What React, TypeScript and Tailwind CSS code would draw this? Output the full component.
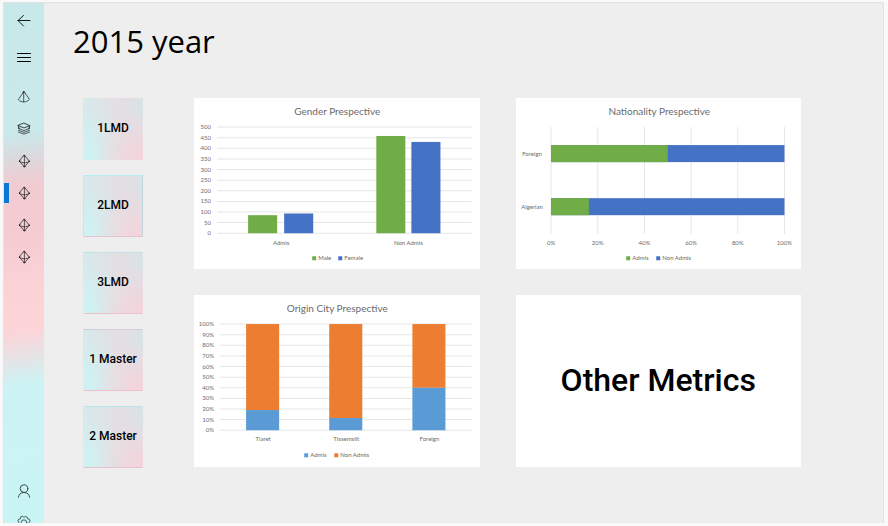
import type { ReactNode } from "react";

const GREEN = "#70ad47";
const BLUE = "#4472c4";
const SKY = "#5b9bd5";
const ORANGE = "#ed7d31";

function Icon({ children }: { children: ReactNode }) {
  return (
    <svg
      width="16"
      height="16"
      viewBox="0 0 16 16"
      fill="none"
      stroke="currentColor"
      strokeLinecap="round"
      strokeLinejoin="round"
      aria-hidden="true"
    >
      {children}
    </svg>
  );
}

const BackIcon = () => (
  <Icon>
    <path d="M14 7.5H2M7.5 2.5L2 7.5l5.5 5.5" strokeWidth="0.9" />
  </Icon>
);

const MenuIcon = () => (
  <Icon>
    <path d="M1.5 4.5h13M1.5 8.5h13M1.5 12.5h13" strokeWidth="1.1" />
  </Icon>
);

const PyramidIcon = () => (
  <Icon>
    <path d="M7.7 2.8L2.3 10.6C3.6 12.2 5.6 12.9 7.7 12.9S11.8 12.2 13.2 10.6ZM7.7 2.8V12.9" strokeWidth="0.7" />
    <path d="M6.9 3.2L7.7 2.4L8.5 3.2" strokeWidth="1" />
  </Icon>
);

const LayersIcon = () => (
  <Icon>
    <path d="M8 2.2L13.8 4.6L8 7L2.2 4.6Z" strokeWidth="0.8" />
    <path
      d="M2.4 6.6L3.8 7.3M13.6 6.6L12.2 7.3M2.4 7.4L8 9.6L13.6 7.4M2.4 9.2L8 11.4L13.6 9.2M2.4 11L8 13.2L13.6 11M2.2 4.6L2.6 6.8M13.8 4.6L13.4 6.8"
      strokeWidth="0.7"
    />
  </Icon>
);

const OctahedronIcon = () => (
  <Icon>
    <path d="M8.4 2.3L13.4 8.2L8.4 14L3.4 8.2Z" strokeWidth="0.7" />
    <path d="M8.4 2.3V14M3.4 8.2C5 9.4 6.6 9.8 8.4 9.8s3.4-.4 5-1.6" strokeWidth="0.7" />
    <path d="M7.7 2.9L8.4 2.2L9.1 2.9M7.7 13.4L8.4 14.1L9.1 13.4M3.8 7.7L3.3 8.2L3.8 8.7M13 7.7L13.5 8.2L13 8.7" strokeWidth="1" />
  </Icon>
);

const UserIcon = () => (
  <Icon>
    <circle cx="8" cy="5.6" r="3.8" strokeWidth="1" />
    <path d="M2.4 14.2C2.6 11.5 4.8 9.5 8 9.5s5.4 2 5.6 4.7" strokeWidth="1" />
  </Icon>
);

const GearIcon = () => (
  <Icon>
    <path
      d="M6.6 1.4L8 2.4l1.4-1 1.8.7.3 1.7 1.7.3.9 1.9-.9 1.5 1 1.6-.9 1.8-1.7.3-.4 1.7-1.8.7L8 12.7l-1.4.9-1.8-.7-.4-1.7-1.7-.3-.9-1.8 1-1.6L1.9 6l.9-1.9 1.7-.3.3-1.7z"
      strokeWidth="0.9"
    />
    <circle cx="8" cy="7.6" r="2.8" strokeWidth="0.9" />
  </Icon>
);

function NavButton({
  label,
  active = false,
  tall = false,
  children,
}: {
  label: string;
  active?: boolean;
  tall?: boolean;
  children: ReactNode;
}) {
  return (
    <button
      type="button"
      aria-label={label}
      aria-current={active ? "page" : undefined}
      className={`relative flex w-full shrink-0 items-center justify-center ${tall ? "h-9" : "h-8"}`}
    >
      {active && <span className="absolute left-0 h-5 w-[5px] bg-[#0a78d7]" />}
      {children}
    </button>
  );
}

type LegendItem = { label: string; color: string; x: number };

function ChartFrame({
  title,
  legend,
  children,
}: {
  title: string;
  legend: LegendItem[];
  children: ReactNode;
}) {
  return (
    <section className="bg-white">
      <svg
        viewBox="0 0 285 171"
        role="img"
        aria-label={title}
        className="block w-full font-['Lato',sans-serif]"
      >
        <text x="143" y="17" textAnchor="middle" className="fill-[#6b6b6b] text-[10px]">
          {title}
        </text>
        {children}
        {legend.map((item) => (
          <g key={item.label}>
            <rect x={item.x} y="158" width="4" height="4" fill={item.color} />
            <text x={item.x + 6} y="162" className="fill-[#6b6b6b] text-[6px]">
              {item.label}
            </text>
          </g>
        ))}
      </svg>
    </section>
  );
}

const TOP = 29;
const BASE = 135;

function ValueAxis({ labels, left }: { labels: string[]; left: number }) {
  const step = (BASE - TOP) / (labels.length - 1);
  return (
    <>
      {labels.map((label, i) => {
        const y = BASE - i * step;
        return (
          <g key={label}>
            <line x1={left} x2="277" y1={y} y2={y} stroke="#e6e6e6" />
            <text x={left - 6} y={y + 2} textAnchor="end" className="fill-[#6b6b6b] text-[6px]">
              {label}
            </text>
          </g>
        );
      })}
    </>
  );
}

function Category({ x, y, children }: { x: number; y: number; children: string }) {
  return (
    <text x={x} y={y} textAnchor="middle" className="fill-[#6b6b6b] text-[6px]">
      {children}
    </text>
  );
}

function GenderChart() {
  const labels = Array.from({ length: 11 }, (_, i) => String(i * 50));
  const bars = [
    { x: 54, value: 85, color: GREEN },
    { x: 90, value: 93, color: BLUE },
    { x: 182, value: 458, color: GREEN },
    { x: 217, value: 430, color: BLUE },
  ];
  return (
    <ChartFrame
      title="Gender Prespective"
      legend={[
        { label: "Male", color: GREEN, x: 118 },
        { label: "Female", color: BLUE, x: 144 },
      ]}
    >
      <ValueAxis labels={labels} left={23} />
      {bars.map((bar) => {
        const height = (bar.value / 500) * (BASE - TOP);
        return <rect key={bar.x} x={bar.x} y={BASE - height} width="29" height={height} fill={bar.color} />;
      })}
      <Category x={87} y={147}>Admis</Category>
      <Category x={214} y={147}>Non Admis</Category>
    </ChartFrame>
  );
}

function OriginChart() {
  const labels = Array.from({ length: 11 }, (_, i) => `${i * 10}%`);
  const bars = [
    { x: 52, share: 0.19, label: "Tiaret" },
    { x: 135, share: 0.115, label: "Tissemsilt" },
    { x: 218, share: 0.4, label: "Foreign" },
  ];
  return (
    <ChartFrame
      title="Origin City Prespective"
      legend={[
        { label: "Admis", color: SKY, x: 110 },
        { label: "Non Admis", color: ORANGE, x: 140 },
      ]}
    >
      <ValueAxis labels={labels} left={26} />
      {bars.map((bar) => {
        const height = bar.share * (BASE - TOP);
        return (
          <g key={bar.label}>
            <rect x={bar.x} y={TOP} width="33" height={BASE - TOP - height} fill={ORANGE} />
            <rect x={bar.x} y={BASE - height} width="33" height={height} fill={SKY} />
            <Category x={bar.x + 17} y={146}>{bar.label}</Category>
          </g>
        );
      })}
    </ChartFrame>
  );
}

function NationalityChart() {
  const left = 35;
  const width = 233;
  const bars = [
    { y: 47, share: 0.5, label: "Foreign" },
    { y: 100, share: 0.162, label: "Algerian" },
  ];
  return (
    <ChartFrame
      title="Nationality Prespective"
      legend={[
        { label: "Admis", color: GREEN, x: 110 },
        { label: "Non Admis", color: BLUE, x: 140 },
      ]}
    >
      {[0, 20, 40, 60, 80, 100].map((tick) => {
        const x = left + (tick / 100) * width;
        return (
          <g key={tick}>
            <line x1={x} x2={x} y1={TOP} y2="136" stroke="#e6e6e6" />
            <Category x={x} y={147}>{`${tick}%`}</Category>
          </g>
        );
      })}
      {bars.map((bar) => (
        <g key={bar.label}>
          <rect x={left} y={bar.y} width={width} height="17" fill={BLUE} />
          <rect x={left} y={bar.y} width={width * bar.share} height="17" fill={GREEN} />
          <Category x={16} y={bar.y + 11}>{bar.label}</Category>
        </g>
      ))}
    </ChartFrame>
  );
}

const levels = [
  { label: "1LMD", edge: "border-transparent" },
  { label: "2LMD", edge: "border-t-[#b5ecef] border-l-[#b5ecef] border-r-[#bcd3d8] border-b-[#e3c3cc]" },
  { label: "3LMD", edge: "border-x-transparent border-t-[#bfe0e4] border-b-[#eebfc9]" },
  { label: "1 Master", edge: "border-x-transparent border-t-[#cfcfd4] border-b-[#eebfc9]" },
  { label: "2 Master", edge: "border-x-transparent border-t-[#b5e6ea] border-b-[#e3c3cc]" },
];

export default function App() {
  return (
    <div className="h-screen min-h-[400px] bg-[#f9f9f9] pt-[2px] pr-1 pb-[3px] pl-[3px] text-black">
      <div className="flex h-full overflow-hidden border-x border-t border-[#e2e2e2] bg-[#eeeeee]">
        <aside className="flex w-10 shrink-0 flex-col bg-[linear-gradient(172deg,#c8e9ea_0%,#c9e9eb_25%,#dcd9dd_30%,#f1cbd2_35%,#f6cbd2_45%,#fbd3d6_55%,#fcd5d9_63%,#e6e3e6_68%,#cdf3f4_73%,#c9f5f5_100%)]">
          <NavButton label="Back" tall><BackIcon /></NavButton>
          <NavButton label="Open navigation" tall><MenuIcon /></NavButton>
          <nav aria-label="Main" className="flex flex-col pt-1.5 text-[#1c1c1c]">
            <NavButton label="Overview"><PyramidIcon /></NavButton>
            <NavButton label="Layers"><LayersIcon /></NavButton>
            <NavButton label="2014"><OctahedronIcon /></NavButton>
            <NavButton label="2015" active><OctahedronIcon /></NavButton>
            <NavButton label="2016"><OctahedronIcon /></NavButton>
            <NavButton label="2017"><OctahedronIcon /></NavButton>
          </nav>
          <div className="mt-auto -mb-4 flex flex-col text-[#3d4c4d]">
            <NavButton label="Account"><UserIcon /></NavButton>
            <NavButton label="Settings"><GearIcon /></NavButton>
          </div>
        </aside>
        <main className="min-w-0 flex-1 pt-5 pr-[82px]">
          <h1 className="pl-[29px] font-['Open_Sans',sans-serif] text-[31px] leading-9">2015 year</h1>
          <div className="flex items-start gap-[51px] pt-[39px] pl-[39px]">
            <div className="flex w-[60px] shrink-0 flex-col gap-[15px]">
              {levels.map((level) => (
                <button
                  key={level.label}
                  type="button"
                  className={`h-[62px] border bg-[radial-gradient(circle_at_100%_100%,#f6d3da_0%,#f6d3da00_60%),radial-gradient(circle_at_0%_100%,#cdf4f5_0%,#cdf4f500_60%),linear-gradient(90deg,#d6eaec_0%,#e4dee2_60%,#d9e3e7_100%)] bg-origin-border pb-0.5 font-['Roboto',sans-serif] text-[12px] font-medium whitespace-nowrap ${level.edge}`}
                >
                  {level.label}
                </button>
              ))}
            </div>
            <div className="grid min-w-0 flex-1 grid-cols-2 gap-x-9 gap-y-[26px]">
              <GenderChart />
              <NationalityChart />
              <OriginChart />
              <button
                type="button"
                className="bg-white pb-0.5 font-['Roboto',sans-serif] text-[32px] font-medium"
              >
                Other Metrics
              </button>
            </div>
          </div>
        </main>
      </div>
    </div>
  );
}
